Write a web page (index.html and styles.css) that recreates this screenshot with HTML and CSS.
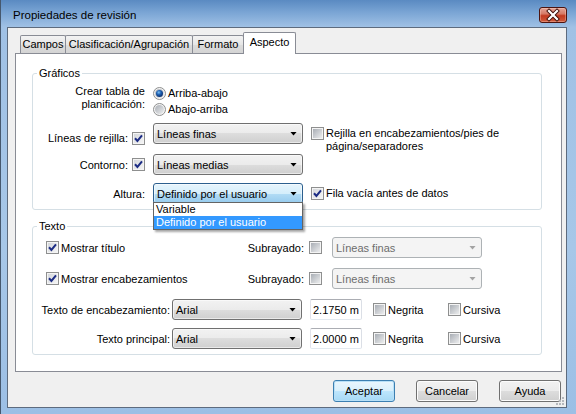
FILE: index.html
```html
<!DOCTYPE html>
<html lang="es">
<head>
<meta charset="utf-8">
<title>Propiedades de revisión</title>
<link rel="stylesheet" href="styles.css">
</head>
<body>
<svg class="defs" width="0" height="0" aria-hidden="true">
  <defs>
    <linearGradient id="cbg" x1="0" y1="0" x2="1" y2="1">
      <stop offset="0" stop-color="#a9aeb5"/>
      <stop offset="1" stop-color="#ecedee"/>
    </linearGradient>
    <linearGradient id="cbgon" x1="0" y1="0" x2="1" y2="1">
      <stop offset="0" stop-color="#d4d7db"/>
      <stop offset="1" stop-color="#f4f4f5"/>
    </linearGradient>
    <linearGradient id="rbg" x1="0" y1="0" x2="1" y2="1">
      <stop offset="0" stop-color="#a9aeb5"/>
      <stop offset="1" stop-color="#eeeff0"/>
    </linearGradient>
    <radialGradient id="rdot" cx="0.4" cy="0.35" r="0.7">
      <stop offset="0" stop-color="#7cc0f5"/>
      <stop offset="0.45" stop-color="#1d5fb0"/>
      <stop offset="1" stop-color="#0b2a66"/>
    </radialGradient>
  </defs>
</svg>

<div class="window">
  <div class="titlebar">
    <span class="title">Propiedades de revisión</span>
    <span class="close">
      <svg width="26" height="14" viewBox="0 0 26 14">
        <path d="M9 3 L17 11 M17 3 L9 11" stroke="#3b0c07" stroke-width="4" stroke-linecap="square"/>
        <path d="M9 3 L17 11 M17 3 L9 11" stroke="#ffffff" stroke-width="2.2" stroke-linecap="square"/>
      </svg>
    </span>
  </div>

  <div class="body">
    <div class="tabs">
      <div class="tab t-campos">Campos</div>
      <div class="tab t-clas">Clasificación/Agrupación</div>
      <div class="tab t-formato">Formato</div>
      <div class="tab t-aspecto active">Aspecto</div>
    </div>

    <div class="panel">
      <fieldset class="group">
        <legend>Gráficos</legend>

        <div class="grow plan">
          <div class="glab two">Crear tabla de<br>planificación:</div>
          <div class="radios">
            <div class="opt">
              <svg class="rb" viewBox="0 0 13 13"><circle cx="6.5" cy="6.5" r="6" fill="#f4f4f4" stroke="#8e8f8f"/><circle cx="6.5" cy="6.5" r="4.5" fill="url(#rbg)"/><circle cx="6.5" cy="6.5" r="3.5" fill="url(#rdot)"/></svg>
              <span>Arriba-abajo</span>
            </div>
            <div class="opt">
              <svg class="rb" viewBox="0 0 13 13"><circle cx="6.5" cy="6.5" r="6" fill="#f4f4f4" stroke="#8e8f8f"/><circle cx="6.5" cy="6.5" r="4.5" fill="url(#rbg)"/></svg>
              <span>Abajo-arriba</span>
            </div>
          </div>
        </div>

        <div class="grow r2">
          <div class="glab">
            <span>Líneas de rejilla:</span>
            <svg class="cb" viewBox="0 0 13 13"><rect x=".5" y=".5" width="12" height="12" fill="#f4f4f4" stroke="#8e8f8f"/><rect x="2" y="2" width="9" height="9" fill="url(#cbgon)"/><path d="M3 6.3 L5.4 8.9 L10 3.3" fill="none" stroke="#1c2c84" stroke-width="2"/></svg>
          </div>
          <div class="combo"><span>Líneas finas</span></div>
          <div class="gextra">
            <svg class="cb" viewBox="0 0 13 13"><rect x=".5" y=".5" width="12" height="12" fill="#f4f4f4" stroke="#8e8f8f"/><rect x="2" y="2" width="9" height="9" fill="url(#cbg)"/></svg>
            <span>Rejilla en encabezamientos/pies de<br>página/separadores</span>
          </div>
        </div>

        <div class="grow r3">
          <div class="glab">
            <span>Contorno:</span>
            <svg class="cb" viewBox="0 0 13 13"><rect x=".5" y=".5" width="12" height="12" fill="#f4f4f4" stroke="#8e8f8f"/><rect x="2" y="2" width="9" height="9" fill="url(#cbgon)"/><path d="M3 6.3 L5.4 8.9 L10 3.3" fill="none" stroke="#1c2c84" stroke-width="2"/></svg>
          </div>
          <div class="combo"><span>Líneas medias</span></div>
        </div>

        <div class="grow r4">
          <div class="glab"><span>Altura:</span></div>
          <div class="combo focus">
            <span>Definido por el usuario</span>
            <div class="dd">
              <div class="ddi">Variable</div>
              <div class="ddi sel">Definido por el usuario</div>
            </div>
          </div>
          <div class="gextra mid">
            <svg class="cb" viewBox="0 0 13 13"><rect x=".5" y=".5" width="12" height="12" fill="#f4f4f4" stroke="#8e8f8f"/><rect x="2" y="2" width="9" height="9" fill="url(#cbgon)"/><path d="M3 6.3 L5.4 8.9 L10 3.3" fill="none" stroke="#1c2c84" stroke-width="2"/></svg>
            <span>Fila vacía antes de datos</span>
          </div>
        </div>
      </fieldset>

      <fieldset class="group texto">
        <legend>Texto</legend>

        <div class="trow ra">
          <div class="chkpair">
            <div class="cbl">
              <svg class="cb" viewBox="0 0 13 13"><rect x=".5" y=".5" width="12" height="12" fill="#f4f4f4" stroke="#8e8f8f"/><rect x="2" y="2" width="9" height="9" fill="url(#cbgon)"/><path d="M3 6.3 L5.4 8.9 L10 3.3" fill="none" stroke="#1c2c84" stroke-width="2"/></svg>
              <span>Mostrar título</span>
            </div>
            <span>Subrayado:</span>
          </div>
          <svg class="cb sub-cb" viewBox="0 0 13 13"><rect x=".5" y=".5" width="12" height="12" fill="#f4f4f4" stroke="#8e8f8f"/><rect x="2" y="2" width="9" height="9" fill="url(#cbg)"/></svg>
          <div class="combo dis"><span>Líneas finas</span></div>
        </div>

        <div class="trow ra rb2">
          <div class="chkpair">
            <div class="cbl">
              <svg class="cb" viewBox="0 0 13 13"><rect x=".5" y=".5" width="12" height="12" fill="#f4f4f4" stroke="#8e8f8f"/><rect x="2" y="2" width="9" height="9" fill="url(#cbgon)"/><path d="M3 6.3 L5.4 8.9 L10 3.3" fill="none" stroke="#1c2c84" stroke-width="2"/></svg>
              <span>Mostrar encabezamientos</span>
            </div>
            <span>Subrayado:</span>
          </div>
          <svg class="cb sub-cb" viewBox="0 0 13 13"><rect x=".5" y=".5" width="12" height="12" fill="#f4f4f4" stroke="#8e8f8f"/><rect x="2" y="2" width="9" height="9" fill="url(#cbg)"/></svg>
          <div class="combo dis"><span>Líneas finas</span></div>
        </div>

        <div class="trow rc">
          <div class="tlab">Texto de encabezamiento:</div>
          <div class="combo font"><span>Arial</span></div>
          <div class="edit">2.1750 m</div>
          <div class="cbo">
            <svg class="cb" viewBox="0 0 13 13"><rect x=".5" y=".5" width="12" height="12" fill="#f4f4f4" stroke="#8e8f8f"/><rect x="2" y="2" width="9" height="9" fill="url(#cbg)"/></svg>
            <span>Negrita</span>
          </div>
          <div class="cbo">
            <svg class="cb" viewBox="0 0 13 13"><rect x=".5" y=".5" width="12" height="12" fill="#f4f4f4" stroke="#8e8f8f"/><rect x="2" y="2" width="9" height="9" fill="url(#cbg)"/></svg>
            <span>Cursiva</span>
          </div>
        </div>

        <div class="trow rc rd">
          <div class="tlab">Texto principal:</div>
          <div class="combo font"><span>Arial</span></div>
          <div class="edit">2.0000 m</div>
          <div class="cbo">
            <svg class="cb" viewBox="0 0 13 13"><rect x=".5" y=".5" width="12" height="12" fill="#f4f4f4" stroke="#8e8f8f"/><rect x="2" y="2" width="9" height="9" fill="url(#cbg)"/></svg>
            <span>Negrita</span>
          </div>
          <div class="cbo">
            <svg class="cb" viewBox="0 0 13 13"><rect x=".5" y=".5" width="12" height="12" fill="#f4f4f4" stroke="#8e8f8f"/><rect x="2" y="2" width="9" height="9" fill="url(#cbg)"/></svg>
            <span>Cursiva</span>
          </div>
        </div>
      </fieldset>
    </div>

    <div class="buttons">
      <button class="btn default">Aceptar</button>
      <button class="btn">Cancelar</button>
      <button class="btn">Ayuda</button>
    </div>

    <svg class="grip" width="9" height="9" viewBox="0 0 9 9">
      <rect x="6" y="0" width="2" height="2" fill="#b5b8bd"/>
      <rect x="3" y="3" width="2" height="2" fill="#b5b8bd"/>
      <rect x="6" y="3" width="2" height="2" fill="#b5b8bd"/>
      <rect x="0" y="6" width="2" height="2" fill="#b5b8bd"/>
      <rect x="3" y="6" width="2" height="2" fill="#b5b8bd"/>
      <rect x="6" y="6" width="2" height="2" fill="#b5b8bd"/>
    </svg>
  </div>
</div>
</body>
</html>
```

FILE: styles.css
```css
html, body {
  margin: 0;
  padding: 0;
}

body {
  font-family: "Liberation Sans", Arial, sans-serif;
  font-size: 11px;
  color: #000;
  background: #a6c6e8;
}

.defs {
  position: absolute;
  width: 0;
  height: 0;
  overflow: hidden;
}

.window {
  width: 576px;
  height: 414px;
  box-sizing: border-box;
  border-left: 1px solid #46586e;
  background: linear-gradient(#5a8ac2 0px, #79a4d4 12px, #a0c1e5 27px, #a7c7e8 60%, #9cbfe5 100%);
  display: flex;
  flex-direction: column;
}

/* ---------- title bar ---------- */
.titlebar {
  height: 27px;
  box-sizing: border-box;
  padding: 3px 9px 0 12px;
  display: flex;
  align-items: center;
  justify-content: space-between;
  flex: none;
}

.title {
  font-size: 11.5px;
  color: #000;
}

.close {
  width: 28px;
  height: 16px;
  box-sizing: border-box;
  border: 1px solid #4d1410;
  border-radius: 3px;
  background: linear-gradient(#e3a497 0%, #d67a66 42%, #c23a20 55%, #cf5b3d 100%);
  box-shadow: inset 0 0 0 1px rgba(255, 220, 210, 0.35);
  display: flex;
  align-items: center;
  justify-content: center;
}

.close svg {
  display: block;
}

/* ---------- dialog body ---------- */
.body {
  flex: 1;
  margin: 0 9px 6px 6px;
  border: 1px solid #5d6b7e;
  background: #f0f0f0;
  padding: 4px 0 5px 0;
  position: relative;
  display: flex;
  flex-direction: column;
}

/* ---------- tabs ---------- */
.tabs {
  display: flex;
  align-items: flex-end;
  height: 21px;
  margin-left: 12px;
  flex: none;
}

.tab {
  height: 18px;
  box-sizing: border-box;
  border: 1px solid #898c95;
  border-bottom: none;
  border-radius: 2px 2px 0 0;
  background: linear-gradient(#f3f3f3, #e6e6e6 50%, #dcdcdc 50%, #d4d4d4);
  display: flex;
  align-items: center;
  justify-content: center;
  padding-bottom: 1px;
  white-space: nowrap;
}

.t-campos { width: 46px; }
.t-clas { width: 128px; margin-left: -1px; }
.t-formato { width: 52px; margin-left: -1px; }

.tab.active {
  width: 53px;
  height: 22px;
  margin-left: -1px;
  margin-bottom: -1px;
  background: #fff;
  position: relative;
  z-index: 1;
  padding-bottom: 3px;
}

/* ---------- panel ---------- */
.panel {
  margin-left: 7px;
  width: 547px;
  box-sizing: border-box;
  border: 1px solid #898c95;
  background: #fff;
  padding: 13px 0 16px 0;
  flex: none;
}

.group {
  margin: 0 0 0 16px;
  width: 510px;
  box-sizing: border-box;
  border: 1px solid #d5dfe5;
  border-radius: 3px;
  padding: 4px 0 5px 0;
  min-width: 0;
}

.group legend {
  padding: 0 2px;
  margin-left: 4px;
  line-height: 13px;
  font-size: 11px;
}

.group.texto {
  margin-top: 10px;
}

/* Gráficos rows */
.grow {
  display: grid;
  grid-template-columns: 112px 150px auto;
  column-gap: 8px;
  height: 21px;
}

.grow.plan { height: 32px; }
.grow.r2 { margin-top: 7px; }
.grow.r3 { margin-top: 10px; }
.grow.r4 { margin-top: 8px; }

.glab {
  display: flex;
  justify-content: flex-end;
  align-items: center;
  gap: 4px;
  white-space: nowrap;
}

.glab.two {
  display: block;
  text-align: right;
  line-height: 13px;
  padding-top: 1px;
}

.radios {
  padding-top: 1px;
}

.opt {
  display: flex;
  align-items: center;
  gap: 2px;
  height: 16px;
}

.rb {
  width: 13px;
  height: 13px;
  flex: none;
  display: block;
}

.cb {
  width: 13px;
  height: 13px;
  flex: none;
  display: block;
}

.gextra {
  display: flex;
  align-items: flex-start;
  gap: 2px;
  line-height: 13px;
  padding-top: 4px;
  white-space: nowrap;
}

.gextra.mid {
  align-items: center;
  padding-top: 0;
  height: 21px;
}

/* combo boxes */
.combo {
  height: 21px;
  box-sizing: border-box;
  border: 1px solid #707070;
  border-radius: 3px;
  background: linear-gradient(#f2f2f2, #ebebeb 50%, #dddddd 50%, #cfcfcf);
  box-shadow: inset 0 0 0 1px rgba(255, 255, 255, 0.55);
  display: flex;
  align-items: center;
  padding-left: 3px;
  white-space: nowrap;
}

.combo::after {
  content: "";
  width: 7px;
  height: 4px;
  margin-left: auto;
  margin-right: 5px;
  background: #000;
  clip-path: polygon(0 0, 100% 0, 50% 100%);
  flex: none;
}

.combo.focus {
  position: relative;
  border-color: #2c5f8e;
  background: linear-gradient(#e6f4fc, #d5eefb 50%, #b3dcf5 50%, #96cbee);
}

.combo.dis {
  width: 150px;
  margin-left: 10px;
  border-color: #adb2b5;
  background: #f4f4f4;
  box-shadow: none;
  color: #6d6d6d;
}

.combo.dis::after {
  background: #a3a3a3;
}

.combo.font {
  width: 130px;
  margin-left: 2px;
}

/* dropdown list */
.dd {
  position: absolute;
  left: -1px;
  top: calc(100% - 1px);
  width: 150px;
  box-sizing: border-box;
  border: 1px solid #646464;
  background: #fff;
  box-shadow: 2px 2px 2px rgba(0, 0, 0, 0.35);
  z-index: 5;
  color: #000;
}

.ddi {
  height: 13px;
  line-height: 13px;
  padding-left: 2px;
}

.ddi.sel {
  background: #3399ff;
  color: #fff;
}

/* Texto rows */
.trow {
  display: flex;
  align-items: center;
  height: 21px;
  white-space: nowrap;
}

.trow.ra { padding-left: 13px; }
.trow.rb2 { margin-top: 10px; }
.trow.rc { margin-top: 10px; }
.trow.rd { margin-top: 8px; }

.chkpair {
  width: 258px;
  display: flex;
  justify-content: space-between;
  align-items: center;
}

.cbl {
  display: flex;
  align-items: center;
  gap: 2px;
}

.sub-cb {
  margin-left: 5px;
}

.tlab {
  width: 137px;
  text-align: right;
}

.edit {
  width: 52px;
  height: 21px;
  box-sizing: border-box;
  margin-left: 8px;
  border: 1px solid #abadb3;
  border-color: #abadb3 #dbdfe6 #e3e9ef #e2e3ea;
  border-radius: 2px;
  background: #fff;
  display: flex;
  align-items: center;
  padding-left: 2px;
}

.cbo {
  display: flex;
  align-items: center;
  gap: 2px;
  width: 75px;
}

.edit + .cbo {
  margin-left: 11px;
}

/* buttons */
.buttons {
  display: flex;
  justify-content: flex-end;
  gap: 21px;
  margin-top: 8px;
  padding-right: 5px;
  flex: none;
}

.btn {
  width: 62px;
  height: 22px;
  box-sizing: border-box;
  padding: 0;
  margin: 0;
  font: inherit;
  color: #000;
  border: 1px solid #707070;
  border-radius: 3px;
  background: linear-gradient(#f2f2f2, #ebebeb 50%, #dddddd 50%, #cfcfcf);
  box-shadow: inset 0 0 0 1px #fcfcfc;
}

.btn.default {
  border-color: #3c7fb1;
  background: linear-gradient(#eaf6fd, #d9f0fc 50%, #bee6fd 50%, #a7d9f5);
  box-shadow: inset 0 0 0 1px #b8e0f7;
}

.grip {
  position: absolute;
  right: 1px;
  bottom: 1px;
  display: block;
}
```
